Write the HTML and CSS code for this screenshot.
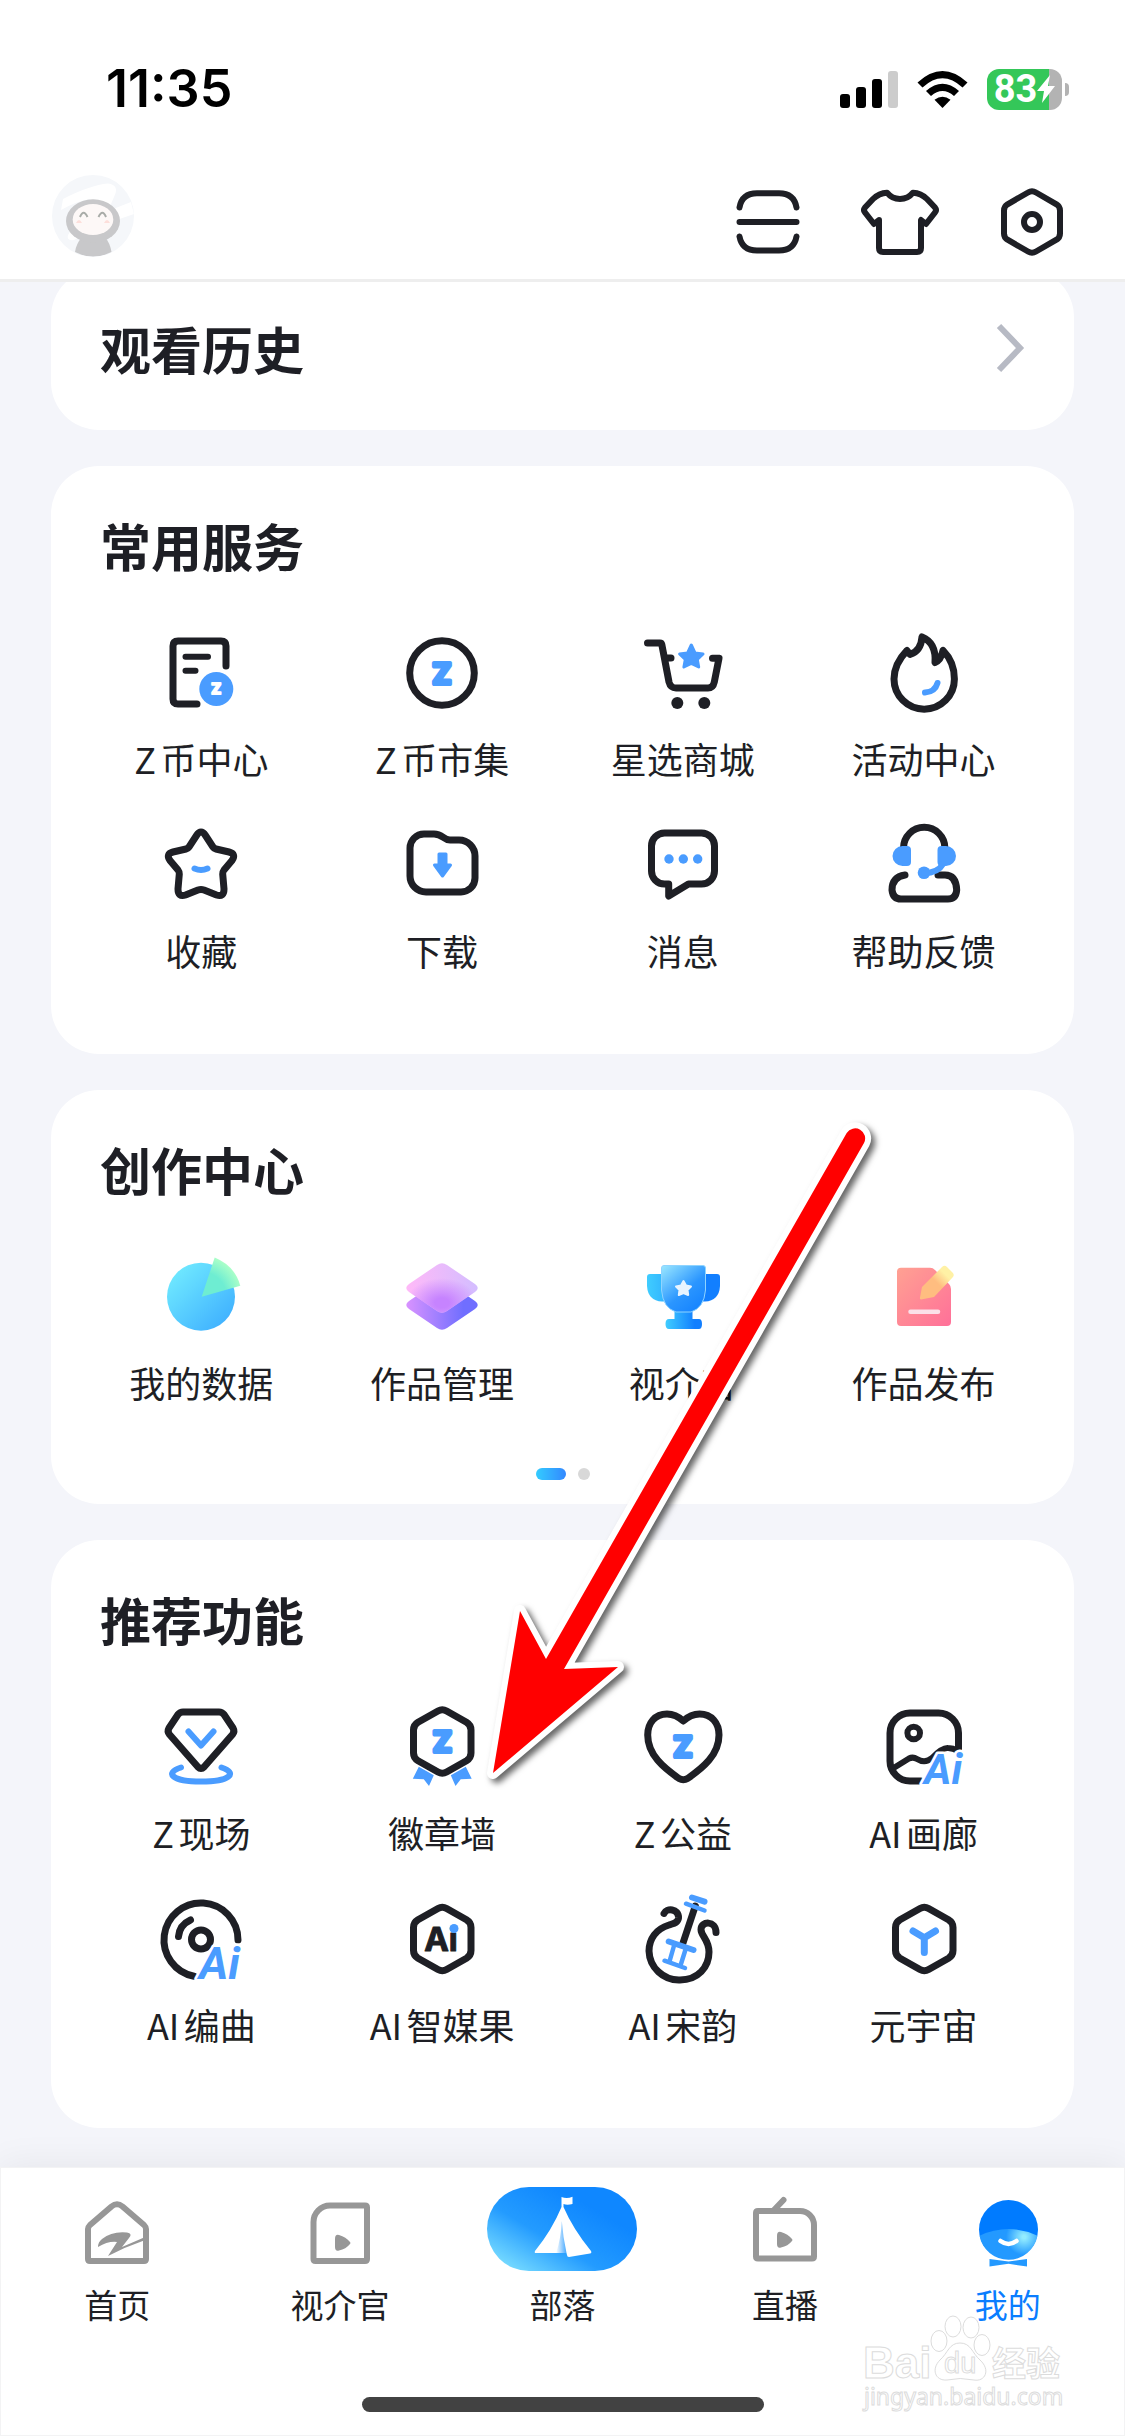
FILE: index.html
```html
<!DOCTYPE html>
<html lang="zh-CN">
<head>
<meta charset="utf-8">
<meta name="viewport" content="width=device-width, initial-scale=1">
<title>我的</title>
<link rel="stylesheet" href="styles.css">
</head>
<body>
<div class="page">
  <header class="header">
    <div class="status">
      <span class="status-time">11:35</span>
      <div class="status-icons">
        <svg class="signal" viewBox="0 0 58 38" aria-hidden="true">
          <rect x="0" y="24" width="10" height="14" rx="3"/><rect x="16" y="17" width="10" height="21" rx="3"/><rect x="32" y="9" width="10" height="29" rx="3"/><rect x="48" y="1" width="10" height="37" rx="3" fill="#ccc"/>
        </svg>
        <svg class="wifi" viewBox="0 0 51 38" aria-hidden="true">
          <path d="M0.5 12.5Q25.500 -10.500 50.500 12.500L45.500 17.500Q25.500 -1 5.500 17.500Z"/>
          <path d="M9 21Q25.500 6.500 42 21L37 26Q25.500 16 14 26Z"/>
          <path d="M17.500 29.800Q25.500 23.500 33.500 29.800L25.500 38Z"/>
        </svg>
        <div class="battery">
          <div class="battery-body"><span>83</span>
            <svg viewBox="0 0 18 28" class="bolt" aria-hidden="true"><path d="M13 0L0 16H7L5 28L18 11H11Z" fill="#fff"/></svg>
          </div>
          <div class="battery-nub"></div>
        </div>
      </div>
    </div>
    <div class="toolbar">
      <button class="avatar" type="button" aria-label="个人资料">
        <svg viewBox="0 0 82 82">
          <clipPath id="avatar-clip"><circle cx="41" cy="41" r="41"/></clipPath>
          <g clip-path="url(#avatar-clip)">
            <rect width="82" height="82" fill="#f5f7fa"/>
            <path fill="#fff" d="M11 24Q38 10 56 8.500Q68 10 62 22L56 36L79 27L82 39L50 50L22 65Q14 66 16 60L30 40L38 24Q25 26 9 35Z"/>
            <path fill="#c8c8ca" d="M30 62H53Q58 68 59.500 77Q41 86 23 77Q24 69 30 62Z"/>
            <ellipse cx="41" cy="46" rx="27" ry="21.700" fill="#c8c8ca"/>
            <ellipse cx="41" cy="44.500" rx="20.300" ry="15.500" fill="#fdf8f7"/>
            <path d="M28 42Q31.500 33.500 35.500 42M46.500 42Q50.500 33.500 54 42" fill="none" stroke="#a9aca8" stroke-width="2"/>
            <path d="M24 48Q27 42 30 48ZM52 48Q55 42 58 48Z" fill="#fddfdb"/>
          </g>
        </svg>
      </button>
      <div class="actions">
        <button type="button" aria-label="扫一扫"><svg viewBox="0 0 78 78" class="line line-6"><path d="M10.500 24.500Q13 10.300 28 10.300H50Q65 10.300 67.500 24.500M10.500 39H67.500M10.500 53.500Q13 67.500 28 67.500H50Q65 67.500 67.500 53.500"/></svg></button>
        <button type="button" aria-label="装扮"><svg viewBox="0 0 78 78" class="line line-6"><path d="M26 9.700Q31 16 39 16Q47 16 52 9.700Q60 10 66 16L74 24.500Q76 27 74 29.500L65 41L60 37V65Q60 69 56 69H22Q18 69 18 65V37L13 41L4 29.500Q2 27 4 24.500L12 16Q18 10 26 9.700Z"/></svg></button>
        <button type="button" aria-label="设置"><svg viewBox="0 0 78 78" class="line line-6"><path d="M35 9.500Q39 7 43 9.500L63.500 21.300Q67 23.500 67 27.500V50.500Q67 54.500 63.500 56.700L43 68.500Q39 71 35 68.500L14.500 56.700Q11 54.500 11 50.500V27.500Q11 23.500 14.500 21.300Z"/><circle cx="39" cy="39" r="8"/></svg></button>
      </div>
    </div>
  </header>

  <main class="content">
    <a class="card history" href="#history">
      <h2 class="card-title">观看历史</h2>
      <svg class="chevron" viewBox="0 0 28 48" aria-hidden="true"><path d="M3 2L24 24L3 46" fill="none" stroke="#b7bac4" stroke-width="6"/></svg>
    </a>

    <section class="card">
      <h2 class="card-title">常用服务</h2>
      <ul class="grid">
        <li><a class="item" href="#coin"><svg viewBox="0 0 90 90" class="line"><path d="M70 38V18Q70 13 65 13H22Q17 13 17 18V71Q17 76 22 76H41"/><path stroke-width="6" d="M29.500 28.700H52M29.500 42.700H39.500"/><circle cx="60.300" cy="61" r="17" class="blue-fill"/><text x="60.300" y="66" class="z-text z-small">Z</text></svg><span>Z币中心</span></a></li>
        <li><a class="item" href="#market"><svg viewBox="0 0 90 90" class="line"><circle cx="45" cy="45" r="32.300"/><text x="45" y="55.500" class="z-text">Z</text></svg><span>Z币市集</span></a></li>
        <li><a class="item" href="#mall"><svg viewBox="0 0 90 90" class="line"><path d="M9.500 15H22Q23.500 15 23.800 16.500L31 54Q32.500 60 38 60H70Q75 60 76.300 54L81 30.300H74.500M27 30H33"/><circle cx="39.300" cy="75" r="6" class="ink-fill"/><circle cx="66.300" cy="75" r="6" class="ink-fill"/><path class="blue-fill soft" d="M53.300 17L57 25L65 26L59.300 31.500L60.700 39L53.300 35.500L45.900 39L47.300 31.500L41.600 26L49.600 25Z"/></svg><span>星选商城</span></a></li>
        <li><a class="item" href="#events"><svg viewBox="0 0 90 90" class="line"><path d="M28 22.500Q15 36 15 51A30.200 30.200 0 0 0 75.400 51Q75.400 34 64 22.500Q62 32 56 34.500Q57.500 15 43 9Q42 23 31 26.500Z"/><path class="blue-line" d="M46 64.500Q56 64 58.500 55"/></svg><span>活动中心</span></a></li>
        <li><a class="item" href="#favorites"><svg viewBox="0 0 90 90" class="line"><path d="M40.500 15.500Q45 8.500 49.500 15.500L57 27Q58 28.500 60 29L73 32Q80.500 34 76 40.500L68 50Q66.500 52 66.700 54L68 69Q68 77.500 60.500 75L48 70Q45 69 42 70L29.500 75Q22 77.500 22 69L23.300 54Q23.500 52 22 50L14 40.500Q9.500 34 17 32L30 29Q32 28.500 33 27Z"/><path class="blue-line" d="M38.500 48.500Q45 51.500 51.500 48.500"/></svg><span>收藏</span></a></li>
        <li><a class="item" href="#downloads"><svg viewBox="0 0 90 90" class="line"><path d="M27 14H37C46 14 46 20 53 20H62A16 16 0 0 1 78 36V58A14 14 0 0 1 64 72H29A16 16 0 0 1 13 56V28A14 14 0 0 1 27 14Z"/><path class="blue-fill soft" d="M42 34H49V45H53.500L45.500 56L37.500 45H42Z"/></svg><span>下载</span></a></li>
        <li><a class="item" href="#messages"><svg viewBox="0 0 90 90" class="line"><path d="M27 13H63.500A13 13 0 0 1 76.500 26V51A13 13 0 0 1 63.500 64H50.500L30.700 76V64H26.500A13 13 0 0 1 13.500 51V26A13 13 0 0 1 26.500 13Z"/><g class="blue-fill"><circle cx="31" cy="39" r="4.700"/><circle cx="45.300" cy="39" r="4.700"/><circle cx="59.700" cy="39" r="4.700"/></g></svg><span>消息</span></a></li>
        <li><a class="item" href="#help"><svg viewBox="0 0 90 90" class="line"><path d="M24.500 28A20.700 20.700 0 0 1 65.900 28M26 55Q13 57 13 70Q14 79 22 79H69Q77 79 77.700 70Q77 55 66 55H59"/><g class="blue-fill"><path d="M23.500 26H28Q32 26 32 30V42Q32 46 28 46H23.500A10 10 0 0 1 23.500 26ZM67 26H62.500Q58.500 26 58.500 30V42Q58.500 46 62.500 46H67A10 10 0 0 0 67 26Z"/><circle cx="45" cy="52.700" r="6.300"/></g><path class="blue-line" d="M45 53Q59 53 64 44"/></svg><span>帮助反馈</span></a></li>
      </ul>
    </section>

    <section class="card card-paged">
      <h2 class="card-title">创作中心</h2>
      <ul class="grid">
        <li><a class="item" href="#data"><svg viewBox="0 0 90 90">
          <linearGradient id="pie" x1="0" y1="0" x2="1" y2="1"><stop offset=".1" stop-color="#70eaff"/><stop offset=".9" stop-color="#3fb0ff"/></linearGradient>
          <radialGradient id="slice" gradientUnits="userSpaceOnUse" cx="45.700" cy="44.700" r="41"><stop offset=".6" stop-color="#6eedd2"/><stop offset="1" stop-color="#abffc8"/></radialGradient>
          <circle cx="45" cy="44.700" r="34" fill="url(#pie)"/><path d="M45.700 44.700L58.700 5.500Q79 14 84.300 33.700Z" fill="url(#slice)"/></svg><span>我的数据</span></a></li>
        <li><a class="item" href="#works"><svg viewBox="0 0 90 90">
          <linearGradient id="layer-low"><stop offset="0" stop-color="#d993ff"/><stop offset=".8" stop-color="#706eff"/></linearGradient>
          <linearGradient id="layer-top"><stop offset="0" stop-color="#ffb9f8"/><stop offset="1" stop-color="#d3bdff"/></linearGradient>
          <radialGradient id="layer-glow" cx=".5" cy=".8" r=".5"><stop offset=".2" stop-color="#c683ff"/><stop offset="1" stop-color="#c683ff" stop-opacity="0"/></radialGradient>
          <g transform="translate(45 53)"><path d="M-5 -23Q0 -26.500 5 -23L33 -4Q38.500 0 33 4L5 23Q0 26.500 -5 23L-33 4Q-38.500 0 -33 -4Z" fill="url(#layer-low)"/></g>
          <g transform="translate(45 36)"><path d="M-5 -23Q0 -26.500 5 -23L33 -4Q38.500 0 33 4L5 23Q0 26.500 -5 23L-33 4Q-38.500 0 -33 -4Z" fill="url(#layer-top)"/><path d="M-5 -23Q0 -26.500 5 -23L33 -4Q38.500 0 33 4L5 23Q0 26.500 -5 23L-33 4Q-38.500 0 -33 -4Z" fill="url(#layer-glow)"/></g></svg><span>作品管理</span></a></li>
        <li><a class="item" href="#reporter"><svg viewBox="0 0 90 90">
          <linearGradient id="cup" x1="0" y1="0" x2=".8" y2="1"><stop offset="0" stop-color="#9be8ff"/><stop offset=".6" stop-color="#2b96ff"/><stop offset="1" stop-color="#1583ff"/></linearGradient>
          <linearGradient id="cup-side"><stop offset="0" stop-color="#40cdff"/><stop offset=".8" stop-color="#127fff"/></linearGradient>
          <path fill="url(#cup-side)" d="M12 22H79Q82 22 82 25V34Q81 49 67 49.500H24Q10 49 9 34V25Q9 22 12 22Z"/>
          <path fill="url(#cup-side)" d="M36.500 55H54.500V67H61Q64 67 64 72T61 77H31Q27.500 77 27.500 72T31 67H36.500Z"/>
          <path fill="url(#cup)" stroke="#8fd4ff" stroke-width="1" d="M26 13.500H65Q67.500 13.500 67.500 16V38Q66 56 53 60H38Q25 56 23.500 38V16Q23.500 13.500 26 13.500Z"/>
          <path fill="#e8f4ff" stroke="#e8f4ff" stroke-width="2" stroke-linejoin="round" d="M45.500 29L48 33.500L53 34.500L49.500 38L50.200 43L45.500 41L40.800 43L41.500 38L38 34.500L43 33.500Z"/></svg><span>视介官</span></a></li>
        <li><a class="item" href="#publish"><svg viewBox="0 0 90 90">
          <linearGradient id="doc" x1="0" y1="0" x2="1" y2="1"><stop offset="0" stop-color="#ffa192"/><stop offset="1" stop-color="#ff7099"/></linearGradient>
          <linearGradient id="pencil" x1="0" y1="1" x2="1" y2="0"><stop offset=".5" stop-color="#ffbd80"/><stop offset=".75" stop-color="#fff1a5"/></linearGradient>
          <path fill="url(#doc)" d="M22 15.700H51Q54 15.700 56 18L70 32Q72 34 72 37V70Q72 74 68 74H22Q18 74 18 70V19.700Q18 15.700 22 15.700Z"/>
          <path fill="url(#pencil)" d="M63 15Q65.500 12.500 68 15L73.500 20.500Q76 23 73.500 25.500L55 45L42 47.500Q40.500 47 41 45.500L43 35Z"/>
          <path d="M31.500 59.700H59" stroke="#fbe0e8" stroke-width="4.500" stroke-linecap="round"/></svg><span>作品发布</span></a></li>
      </ul>
      <div class="dots" aria-hidden="true"><i class="dot dot-active"></i><i class="dot"></i></div>
    </section>

    <section class="card">
      <h2 class="card-title">推荐功能</h2>
      <ul class="grid">
        <li><a class="item" href="#live"><svg viewBox="0 0 90 90" class="line"><path d="M27 10H63Q66 10 68 12.500L77 26Q79 29.500 76.500 32.500L48 65Q45 68 42 65L13.500 32.500Q11 29.500 13 26L22 12.500Q24 10 27 10Z"/><path class="blue-line" d="M32.500 29.500L45 43.500L57.500 29.500M25 65.500C8 71 16 79.500 45 79.500S82 71 65.500 65.500"/></svg><span>Z现场</span></a></li>
        <li><a class="item" href="#badges"><svg viewBox="0 0 90 90" class="line"><path class="blue-fill" d="M21.800 64.700L36.800 73.300L32 84L26.800 77.300L15.800 76.700ZM68.800 64.700L53.800 73.300L58.500 84L63.700 77.300L74.700 76.700Z"/><path d="M41 9Q45.300 6.500 49.600 9L69.500 20.300Q74 23 74 28V51Q74 56 69.500 58.700L49.600 70Q45.300 72.500 41 70L21 58.700Q16.500 56 16.500 51V28Q16.500 23 21 20.300Z"/><text x="45.300" y="49.500" class="z-text">Z</text></svg><span>徽章墙</span></a></li>
        <li><a class="item" href="#charity"><svg viewBox="0 0 90 90" class="line"><path d="M45.300 19C41 15 35 12 29 12C17 12 9.700 21 9.700 33C9.700 53 26 66 41 76.500Q45.300 79 49.600 76.500C64.600 66 81 53 81 33C81 21 73.500 12 61.600 12C55 12 49.600 15 45.300 19Z"/><text x="45" y="55" class="z-text">Z</text></svg><span>Z公益</span></a></li>
        <li><a class="item" href="#gallery"><svg viewBox="0 0 90 90" class="line"><path d="M79.500 48V31A20 20 0 0 0 59.500 11H31A20 20 0 0 0 11 31V59A20 20 0 0 0 31 79H42"/><path stroke-width="6" d="M13 67L30 56.500Q34 54.500 38 57Q46 62 53 56Q63 45.500 69 46Q74 46 79 49"/><circle cx="34.700" cy="31" r="6.300" stroke-width="6"/><text x="45" y="82" class="ai-text">Ai</text></svg><span>AI画廊</span></a></li>
        <li><a class="item" href="#compose"><svg viewBox="0 0 90 90" class="line"><path d="M82 46A37 37 0 1 0 38 82.300M34.500 26Q23.500 31 22.500 42.500"/><circle cx="45" cy="45.500" r="9.500"/><text x="43" y="85" class="ai-text ai-large">Ai</text></svg><span>AI编曲</span></a></li>
        <li><a class="item" href="#media"><svg viewBox="0 0 90 90" class="line"><path d="M41 14.500Q45.300 12 49.600 14.500L69.500 25.800Q74 28.500 74 33.500V56.500Q74 61.500 69.500 64.200L49.600 75.500Q45.300 78 41 75.500L21 64.200Q16.500 61.500 16.500 56.500V33.500Q16.500 28.500 21 25.800Z"/><text x="44" y="57" class="ai-dark">Ai</text><circle class="blue-fill" cx="57" cy="34.500" r="4.500"/></svg><span>AI智媒果</span></a></li>
        <li><a class="item" href="#song"><svg viewBox="0 0 90 90" class="line"><path d="M26 19.500C28 14 41 14 40.500 24C40 29 35 29.500 31 31C18 35 11 45 11 57A30 30 0 0 0 42 86C60 86 71 73 71 58C71 46 63 42 63 35.500C63 27 78 26 78 38.500M57.300 12L45 49"/><g class="blue-line"><path d="M54 3.500L66.500 7.700M30.700 47.500L55.500 56"/><path stroke-width="4.500" d="M48 9.700L66.500 16.500M36.500 50L31.500 67.500M48 54L42.500 71.500M26.500 66.700L47 74"/></g></svg><span>AI宋韵</span></a></li>
        <li><a class="item" href="#metaverse"><svg viewBox="0 0 90 90" class="line"><path d="M41 14.500Q45.300 12 49.600 14.500L69.500 25.800Q74 28.500 74 33.500V56.500Q74 61.500 69.500 64.200L49.600 75.500Q45.300 78 41 75.500L21 64.200Q16.500 61.500 16.500 56.500V33.500Q16.500 28.500 21 25.800Z"/><path class="blue-line blue-bold" d="M34 37L45.300 43.700L56.500 37M45.300 43.700V58.500"/></svg><span>元宇宙</span></a></li>
      </ul>
    </section>
  </main>

  <footer class="tabbar">
    <nav class="tabs">
      <a class="tab" href="#home"><svg viewBox="0 0 84 84" class="tab-line"><path d="M36.500 19.500Q42 15 47.500 19.500L69 38Q71 40 71 42V72Q71 74 69 74H15Q13 74 13 72V42Q13 40 15 38Z"/><path class="gray-fill" d="M23 60Q23 55 27 52Q37 44 52 45.500Q58 46.500 54 51L47 60L69 50.500V53.500Q50 60 33 69L42 55Q33 54 23 60Z"/></svg><span>首页</span></a>
      <a class="tab" href="#video"><svg viewBox="0 0 84 84" class="tab-line"><path d="M32 18.500H67Q69 18.500 69 20.500V72Q69 74 67 74H17.500Q15.500 74 15.500 72V35A16.500 16.500 0 0 1 32 18.500Z"/><path class="gray-fill" d="M37 52Q37 47 41 48Q48 50 52 55Q53 56 52 57Q48 62 41 63.500Q37 64.500 37 60Z"/></svg><span>视介官</span></a>
      <a class="tab" href="#tribe"><svg viewBox="0 0 150 84" class="tab-wide">
        <linearGradient id="pill" gradientUnits="userSpaceOnUse" x1="20" y1="84" x2="70" y2="0"><stop offset="0" stop-color="#7cdfff"/><stop offset=".5" stop-color="#239bff"/><stop offset="1" stop-color="#0f87ff"/></linearGradient>
        <linearGradient id="fold"><stop offset="0" stop-color="#fff"/><stop offset="1" stop-color="#45a8ff"/></linearGradient>
        <rect width="150" height="84" rx="42" fill="url(#pill)"/>
        <path fill="#fff" d="M74.500 10Q80 12 85.500 9.700V17Q80 18.500 76.500 17V20Q86 42 104 64Q105 66 103 66.500L82 70Q80 70 80 68L79.500 66H49Q47 66 48 64Q65 43 74.500 20Z"/>
        <path fill="url(#fold)" d="M74.800 34Q74 52 69 66H79.500Q76 50 74.800 34Z"/></svg><span>部落</span></a>
      <a class="tab" href="#broadcast"><svg viewBox="0 0 84 84" class="tab-line"><path d="M15 24H57A14 14 0 0 1 71 38V69.500Q71 71.500 69 71.500H15Q13 71.500 13 69.500V26Q13 24 15 24ZM31 23L40.500 13"/><path class="gray-fill" d="M34 49Q34 44 38 45Q45 47 49 52Q50 53 49 54Q45 59 38 60.500Q34 61.500 34 57Z"/></svg><span>直播</span></a>
      <a class="tab tab-active" href="#me" aria-current="page"><svg viewBox="0 0 84 84">
        <radialGradient id="glow" gradientUnits="userSpaceOnUse" cx="58" cy="50" r="18"><stop offset=".1" stop-color="#92ecff"/><stop offset="1" stop-color="#2399ff"/></radialGradient>
        <circle cx="42.500" cy="42.500" r="29.500" fill="#007bff"/><path fill="url(#glow)" d="M13.500 48.700Q42.500 35.500 71.500 48.700A29.500 29.500 0 0 1 13.500 48.700Z"/>
        <path d="M34.500 54Q42.500 60 50.500 54" fill="none" stroke="#fff" stroke-width="4.500" stroke-linecap="round"/><path fill="#2399ff" d="M23.500 72L42.500 74.500L61 72V79.500L42.500 76.800L23.500 79.500Z"/></svg><span>我的</span></a>
    </nav>
    <div class="home-indicator"></div>
  </footer>

  <svg class="pointer" viewBox="480 1115 400 680" aria-hidden="true">
    <path d="M493 1773L520 1611L546 1659L846.700 1133A10 10 0 0 1 864 1143L564 1669L618 1667Z" fill="#fff" stroke="#fff" stroke-width="12" stroke-linejoin="round"/>
    <path d="M493 1773L520 1611L546 1659L846.700 1133A10 10 0 0 1 864 1143L564 1669L618 1667Z" fill="#f00"/>
  </svg>

  <svg class="watermark" viewBox="0 0 206 100" role="img" aria-label="Baidu 经验">
    <text x="2" y="64" font-size="44" font-weight="700" font-family="Liberation Sans, sans-serif">Bai</text>
    <g><ellipse cx="78" cy="27" rx="8" ry="10.500"/><ellipse cx="92" cy="12.500" rx="8" ry="10.500"/><ellipse cx="110" cy="13.500" rx="8" ry="10.500"/><ellipse cx="121" cy="31" rx="8" ry="10.500"/><path d="M99 29C110 29 111 39 119 46C130 56 124 68 113 66Q99 63 86 66C74 67 70 55 79 46C87 39 88 29 99 29Z"/></g>
    <text x="83" y="59" font-size="29" font-family="Liberation Sans, sans-serif">du</text>
    <text x="131" y="62" font-size="34" font-weight="700" font-family="Noto Sans CJK SC, sans-serif">经验</text>
    <text x="3" y="91" font-size="23" font-family="Noto Sans, sans-serif">jingyan.baidu.com</text>
  </svg>
</div>
</body>
</html>
```
FILE: styles.css
```css
* { box-sizing: border-box; }

body {
  margin: 0;
  background: #f4f5fa;
  color: #1e1f25;
  font-family: "Noto Sans CJK SC", "Noto Sans", sans-serif;
  text-autospace: normal;
}

a { color: inherit; text-decoration: none; }
ul { margin: 0; padding: 0; list-style: none; }
h2 { margin: 0; }
svg { display: block; overflow: visible; }
button { padding: 0; border: 0; background: none; color: inherit; }

.page {
  position: relative;
  display: flex;
  flex-direction: column;
  min-height: 100vh;
}

/* Header */
.header {
  position: relative;
  z-index: 1;
  background: #fff;
  border-bottom: 3px solid #eee;
}
.status {
  display: flex;
  align-items: center;
  justify-content: space-between;
  padding: 62px 56px 59px 106px;
}
.status-time {
  font: 600 52px/54px Inter, sans-serif;
  color: #000;
}
.status-icons { display: flex; align-items: center; gap: 19px; }
.signal { width: 58px; height: 38px; }
.wifi { width: 51px; height: 38px; }
.battery { display: flex; align-items: center; gap: 3px; }
.battery-body {
  display: flex;
  align-items: center;
  justify-content: center;
  width: 75px;
  height: 41px;
  border-radius: 12px;
  background: linear-gradient(90deg, #34c759 62px, #b3b3b3 62px);
  color: #fff;
  font: 700 38px/41px Roboto, sans-serif;
}
.bolt { width: 18px; height: 28px; }
.battery-nub {
  width: 4px;
  height: 13px;
  border-radius: 0 6px 6px 0;
  background: #b3b3b3;
}
.toolbar {
  display: flex;
  align-items: center;
  justify-content: space-between;
  padding: 0 54px 10px 52px;
}
.avatar { margin-bottom: 12px; }
.avatar svg { width: 82px; height: 82px; }
.actions { display: flex; gap: 54px; }
.actions svg { width: 78px; height: 78px; }

/* Cards: the first one is scrolled partly beneath the header */
.content {
  flex: 1;
  display: flex;
  flex-direction: column;
  gap: 36px;
  margin-top: -13px;
  padding: 0 51px 39px;
}
.card {
  padding: 45px 30px 80px;
  border-radius: 48px;
  background: #fff;
}
.card-paged { padding-bottom: 24px; }
.history {
  display: flex;
  align-items: center;
  justify-content: space-between;
  padding: 45px 50px 48px 30px;
}
.chevron { width: 28px; height: 48px; }
.card-title {
  padding-left: 19px;
  font-size: 51px;
  font-weight: 700;
  line-height: 68px;
}
.grid {
  display: grid;
  grid-template-columns: repeat(4, minmax(0, 1fr));
  row-gap: 38px;
  padding-top: 49px;
}
.item {
  display: flex;
  flex-direction: column;
  align-items: center;
  gap: 16px;
  font-size: 36px;
  line-height: 48px;
  white-space: nowrap;
}
.item svg { width: 90px; height: 90px; }

.dots {
  display: flex;
  justify-content: center;
  gap: 12px;
  margin-top: 62px;
}
.dot { width: 12px; height: 12px; border-radius: 6px; background: #d8d8d8; }
.dot-active { width: 30px; background: linear-gradient(90deg, #33ccff, #3388ff); }

/* Icon strokes */
.line {
  fill: none;
  stroke: #1e1f25;
  stroke-width: 7;
  stroke-linecap: round;
  stroke-linejoin: round;
}
.line-6 { stroke-width: 6; }
.ink-fill { fill: #1e1f25; stroke: none; }
.blue-fill { fill: #4a9cff; stroke: none; }
.blue-fill.soft { stroke: #4a9cff; stroke-width: 3; }
.blue-line { stroke: #4a9cff; stroke-width: 6; }
.blue-bold { stroke-width: 7; }
.z-text {
  fill: #4a9cff;
  stroke: #4a9cff;
  stroke-width: 4;
  font: 700 29px Inter, sans-serif;
  text-anchor: middle;
}
.z-small { fill: #fff; stroke: #fff; stroke-width: 2; font-size: 15px; }
.ai-text {
  fill: #4a9cff;
  stroke: #fff;
  stroke-width: 5;
  paint-order: stroke;
  font: italic 700 42px Roboto, sans-serif;
}
.ai-large { font-size: 45px; }
.ai-dark {
  fill: #1e1f25;
  stroke-width: 1;
  font: 700 33px Inter, sans-serif;
  text-anchor: middle;
}

/* Bottom tabs */
.tabbar {
  padding: 19px 5px 23px;
  border: 1px solid #f3f3f4;
  background: #fff;
  box-shadow: 0 0 36px rgba(0, 0, 0, .07);
}
.tabs { display: grid; grid-template-columns: repeat(5, minmax(0, 1fr)); }
.tab {
  display: flex;
  flex-direction: column;
  align-items: center;
  gap: 12px;
  font-size: 33px;
  line-height: 42px;
}
.tab svg { width: 84px; height: 84px; }
.tab .tab-wide { width: 150px; }
.tab-active { color: #0a7dff; }
.tab-line {
  fill: none;
  stroke: #979797;
  stroke-width: 6;
  stroke-linecap: round;
  stroke-linejoin: round;
}
.gray-fill { fill: #979797; stroke: none; }
.home-indicator {
  width: 402px;
  height: 15px;
  margin: 72px auto 0;
  border-radius: 8px;
  background: #424242;
}

/* Overlays */
.pointer {
  position: absolute;
  z-index: 2;
  top: 1115px;
  left: 480px;
  width: 400px;
  height: 680px;
  pointer-events: none;
  filter: drop-shadow(4px 4px 3px rgba(0, 0, 0, .6));
}
.watermark {
  position: absolute;
  right: 58px;
  bottom: 22px;
  width: 206px;
  height: 100px;
  fill: #fff;
  stroke: #dcdcdc;
  stroke-width: 1;
  pointer-events: none;
}
```
